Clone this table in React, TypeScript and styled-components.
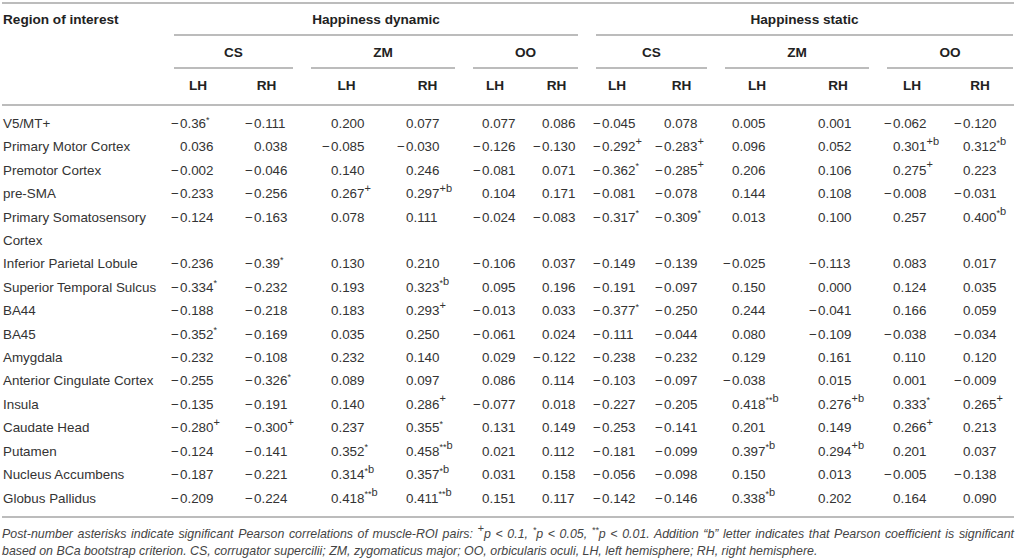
import React from "react";
import styled, { createGlobalStyle } from "styled-components";

const GlobalStyle = createGlobalStyle`
  html, body { margin: 0; padding: 0; background: #ffffff; }
  body { font-family: "Liberation Sans", Arial, Helvetica, sans-serif; color: #333333; }
`;

const COLS = "163px 66px 71px 89px 73px 62px 61px 60px 69px 82px 80px 68px 68px";
const PADS = [6, 14, 20, 6, 9, 7, 6, 8, 7, 11, 6, 8];
const LINE = "#bcbcbc";

const Page = styled.div`
  width: 1012px;
  padding: 2px 2px 0 2px;
`;

const Table = styled.div`
  border-top: 2px solid ${LINE};
  border-bottom: 2px solid ${LINE};
`;

const Header = styled.div`
  display: grid;
  grid-template-columns: ${COLS};
  border-bottom: 2px solid ${LINE};
  font-weight: bold;
  font-size: 13.6px;
  color: #222222;
  line-height: 16px;
`;

const RegionHead = styled.div`
  grid-column: 1;
  grid-row: 1;
  padding: 8px 0 0 1px;
`;

const GroupCell = styled.div<{ $span: number; $last?: boolean }>`
  grid-column: span ${(p) => p.$span};
  padding: 0 ${(p) => (p.$last ? "1px" : "9px")} 0 9px;
`;

const GroupLabel = styled.div<{ $top: number }>`
  text-align: center;
  padding: ${(p) => p.$top}px 0 6px;
  border-bottom: 2px solid ${LINE};
`;

const Blank = styled.div`
  grid-column: 1;
`;

const ColHead = styled.div`
  text-align: center;
  padding: 9px 0 10px;
`;

const Body = styled.div`
  padding: 6px 0 6px;
`;

const Row = styled.div`
  display: grid;
  grid-template-columns: ${COLS};
  align-items: start;
  font-size: 13.4px;
  line-height: 23.4px;
  color: #333333;
`;

const Label = styled.div`
  padding-left: 1px;
`;

const Cell = styled.div<{ $pad: number }>`
  padding-left: ${(p) => p.$pad}px;
  white-space: nowrap;
`;

const Sign = styled.span`
  display: inline-block;
  width: 9px;
`;

const Sup = styled.sup<{ $small?: boolean }>`
  font-size: ${(p) => (p.$small ? "9px" : "11px")};
  line-height: 0;
  position: relative;
  top: ${(p) => (p.$small ? "0px" : "-1px")};
`;

const Note = styled.div`
  padding-top: 8px;
  font-style: italic;
  font-size: 12.4px;
  line-height: 17px;
  color: #444444;
`;

const NoteLine = styled.div<{ $justify?: boolean }>`
  text-align: ${(p) => (p.$justify ? "justify" : "left")};
  text-align-last: ${(p) => (p.$justify ? "justify" : "left")};
`;

type RowData = [string, ...string[]];

const ROWS: RowData[] = [
  ["V5/MT+", "−0.36*", "−0.111", "0.200", "0.077", "0.077", "0.086", "−0.045", "0.078", "0.005", "0.001", "−0.062", "−0.120"],
  ["Primary Motor Cortex", "0.036", "0.038", "−0.085", "−0.030", "−0.126", "−0.130", "−0.292+", "−0.283+", "0.096", "0.052", "0.301+b", "0.312*b"],
  ["Premotor Cortex", "−0.002", "−0.046", "0.140", "0.246", "−0.081", "0.071", "−0.362*", "−0.285+", "0.206", "0.106", "0.275+", "0.223"],
  ["pre-SMA", "−0.233", "−0.256", "0.267+", "0.297+b", "0.104", "0.171", "−0.081", "−0.078", "0.144", "0.108", "−0.008", "−0.031"],
  ["Primary Somatosensory Cortex", "−0.124", "−0.163", "0.078", "0.111", "−0.024", "−0.083", "−0.317*", "−0.309*", "0.013", "0.100", "0.257", "0.400*b"],
  ["Inferior Parietal Lobule", "−0.236", "−0.39*", "0.130", "0.210", "−0.106", "0.037", "−0.149", "−0.139", "−0.025", "−0.113", "0.083", "0.017"],
  ["Superior Temporal Sulcus", "−0.334*", "−0.232", "0.193", "0.323*b", "0.095", "0.196", "−0.191", "−0.097", "0.150", "0.000", "0.124", "0.035"],
  ["BA44", "−0.188", "−0.218", "0.183", "0.293+", "−0.013", "0.033", "−0.377*", "−0.250", "0.244", "−0.041", "0.166", "0.059"],
  ["BA45", "−0.352*", "−0.169", "0.035", "0.250", "−0.061", "0.024", "−0.111", "−0.044", "0.080", "−0.109", "−0.038", "−0.034"],
  ["Amygdala", "−0.232", "−0.108", "0.232", "0.140", "0.029", "−0.122", "−0.238", "−0.232", "0.129", "0.161", "0.110", "0.120"],
  ["Anterior Cingulate Cortex", "−0.255", "−0.326*", "0.089", "0.097", "0.086", "0.114", "−0.103", "−0.097", "−0.038", "0.015", "0.001", "−0.009"],
  ["Insula", "−0.135", "−0.191", "0.140", "0.286+", "−0.077", "0.018", "−0.227", "−0.205", "0.418**b", "0.276+b", "0.333*", "0.265+"],
  ["Caudate Head", "−0.280+", "−0.300+", "0.237", "0.355*", "0.131", "0.149", "−0.253", "−0.141", "0.201", "0.149", "0.266+", "0.213"],
  ["Putamen", "−0.124", "−0.141", "0.352*", "0.458**b", "0.021", "0.112", "−0.181", "−0.099", "0.397*b", "0.294+b", "0.201", "0.037"],
  ["Nucleus Accumbens", "−0.187", "−0.221", "0.314*b", "0.357*b", "0.031", "0.158", "−0.056", "−0.098", "0.150", "0.013", "−0.005", "−0.138"],
  ["Globus Pallidus", "−0.209", "−0.224", "0.418**b", "0.411**b", "0.151", "0.117", "−0.142", "−0.146", "0.338*b", "0.202", "0.164", "0.090"],
];

const GROUPS = ["CS", "ZM", "OO", "CS", "ZM", "OO"];

function Mark({ text }: { text: string }) {
  const stars = text.replace(/[^*]/g, "");
  const rest = text.replace(/\*/g, "");
  return (
    <>
      {stars && <Sup $small>{stars}</Sup>}
      {rest && <Sup>{rest}</Sup>}
    </>
  );
}

function Value({ text }: { text: string }) {
  const m = text.match(/^(−?)([0-9.]+)(.*)$/);
  const minus = m ? m[1] : "";
  const num = m ? m[2] : text;
  const mark = m ? m[3] : "";
  return (
    <>
      <Sign>{minus}</Sign>
      {num}
      {mark && <Mark text={mark} />}
    </>
  );
}

export default function App() {
  return (
    <Page>
      <GlobalStyle />
      <Table>
        <Header>
          <RegionHead>Region of interest</RegionHead>
          <GroupCell $span={6}>
            <GroupLabel $top={8}>Happiness dynamic</GroupLabel>
          </GroupCell>
          <GroupCell $span={6} $last>
            <GroupLabel $top={8}>Happiness static</GroupLabel>
          </GroupCell>
          <Blank />
          {GROUPS.map((g, i) => (
            <GroupCell key={"g" + i} $span={2} $last={i === GROUPS.length - 1}>
              <GroupLabel $top={9}>{g}</GroupLabel>
            </GroupCell>
          ))}
          <Blank />
          {PADS.map((_, i) => (
            <ColHead key={"h" + i}>{i % 2 === 0 ? "LH" : "RH"}</ColHead>
          ))}
        </Header>
        <Body>
          {ROWS.map(([label, ...vals]) => (
            <Row key={label}>
              <Label>{label}</Label>
              {vals.map((v, i) => (
                <Cell key={i} $pad={PADS[i]}>
                  <Value text={v} />
                </Cell>
              ))}
            </Row>
          ))}
        </Body>
      </Table>
      <Note>
        <NoteLine $justify>
          Post-number asterisks indicate significant Pearson correlations of muscle-ROI pairs: <Sup>+</Sup>p &lt; 0.1,{" "}
          <Sup $small>*</Sup>p &lt; 0.05, <Sup $small>**</Sup>p &lt; 0.01. Addition “b” letter indicates that Pearson
          coefficient is significant
        </NoteLine>
        <NoteLine>
          based on BCa bootstrap criterion. CS, corrugator supercilii; ZM, zygomaticus major; OO, orbicularis oculi, LH, left
          hemisphere; RH, right hemisphere.
        </NoteLine>
      </Note>
    </Page>
  );
}
